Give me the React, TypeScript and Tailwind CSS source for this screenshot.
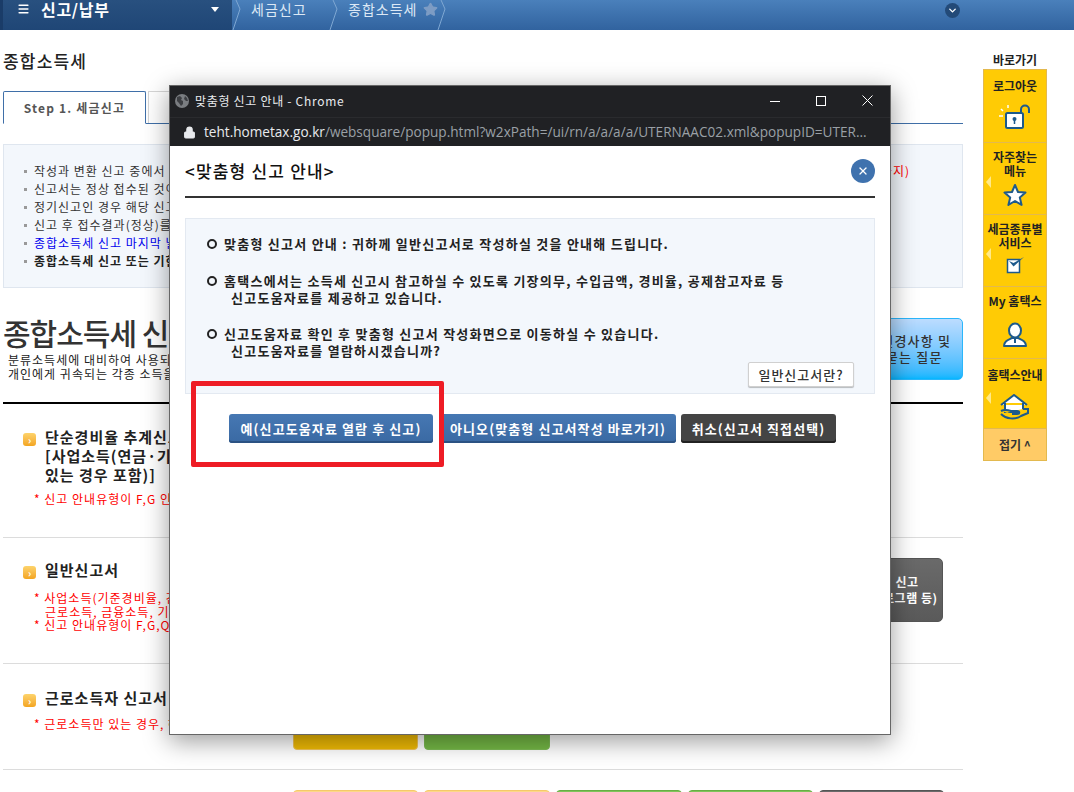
import { ChevronDown, Lock, Menu, Star, X } from 'lucide-react'

const infoLines = [
  { text: '작성과 변환 신고 중에서 선택하여 신고서를 작성하실 수 있습니다.', cls: 'text-[#333]' },
  { text: '신고서는 정상 접수된 것이 확인되어야 신고가 완료됩니다.', cls: 'text-[#333]' },
  { text: '정기신고인 경우 해당 신고기간에 제출하시기 바랍니다.', cls: 'text-[#333]' },
  { text: '신고 후 접수결과(정상)를 반드시 확인하시기 바랍니다.', cls: 'text-[#333]' },
  { text: '종합소득세 신고 마지막 날에는 접속이 지연될 수 있습니다.', cls: 'text-[#0000ee]' },
  { text: '종합소득세 신고 또는 기한후 신고를 선택하십시오.', cls: 'text-[#222] font-bold' },
]

const sideItems = [
  { label: ['로그아웃'], icon: 'lock', box: 'h-[73px] pt-[9px]', iconBox: 'mb-[12px]' },
  { label: ['자주찾는', '메뉴'], icon: 'star', box: 'h-[72px] pt-[7px]', iconBox: 'mb-[7px]', arrow: true },
  { label: ['세금종류별', '서비스'], icon: 'check', box: 'h-[72px] pt-[7px]', iconBox: 'mb-[12px]', arrow: true },
  { label: ['My 홈택스'], icon: 'user', box: 'h-[72px] pt-[7px]', iconBox: 'mb-[10px]' },
  { label: ['홈택스안내'], icon: 'home', box: 'h-[70px] pt-[9px]', iconBox: 'mb-[8px]', arrow: true },
]

function SideIcon({ name }: { name: string }) {
  if (name === 'lock') {
    return (
      <svg width="34" height="26" viewBox="0 0 34 26" fill="none">
        <rect x="8" y="9" width="17" height="15" rx="1.500" fill="#fff" stroke="#1d5a8c" strokeWidth="2" />
        <path d="M23 9V5.500a4 4 0 0 1 8 0V9" stroke="#1d5a8c" strokeWidth="2" />
        <circle cx="16.500" cy="15" r="2" fill="#1d5a8c" />
        <path d="M16.500 16v4" stroke="#1d5a8c" strokeWidth="1.500" />
        <path d="M1 12h4M3 5l2 2M10 1v3" stroke="#fff" strokeWidth="1.500" />
      </svg>
    )
  }
  if (name === 'star') {
    return (
      <svg width="24" height="24" viewBox="0 0 24 24">
        <path d="M12 2l3 7 7.500 .6-5.700 4.900 1.800 7.400L12 18l-6.600 3.900 1.800-7.400L1.500 9.600 9 9z" fill="#fff" stroke="#1d5a8c" strokeWidth="2" strokeLinejoin="round" />
      </svg>
    )
  }
  if (name === 'check') {
    return (
      <svg width="20" height="18" viewBox="0 0 20 18" fill="none">
        <rect x="2.500" y="3.500" width="12" height="13" fill="#fff" stroke="#1d5a8c" strokeWidth="1.500" />
        <path d="M4 5l4.500 5.500L19 1 8.500 7z" fill="#1d5a8c" />
      </svg>
    )
  }
  if (name === 'user') {
    return (
      <svg width="26" height="26" viewBox="0 0 26 26" fill="none">
        <ellipse cx="13" cy="8.500" rx="6" ry="7" fill="#fff" stroke="#1d5a8c" strokeWidth="2" />
        <path d="M2 24c0-5 4-6 8-8h6c4 2 8 3 8 8z" fill="#fff" stroke="#1d5a8c" strokeWidth="2" strokeLinejoin="round" />
        <path d="M13 16v5" stroke="#1d5a8c" strokeWidth="2" />
      </svg>
    )
  }
  return (
    <svg width="30" height="26" viewBox="0 0 30 26" fill="none">
      <path d="M1 11L14 1l13 10M5 9v9h18V9" fill="#fff" stroke="#1d5a8c" strokeWidth="2" />
      <path d="M1 17c4-2 7-1 10 0h6c3 0 3 3 0 3h-5M1 20c5 5 14 6 20 2l7-3v-4h-5" fill="#ffcb05" stroke="#1d5a8c" strokeWidth="2" />
    </svg>
  )
}

function CrumbEdge() {
  return (
    <svg width="9" height="30" viewBox="0 0 9 30" fill="none" className="shrink-0">
      <path d="M4 0l4 9-7 21" stroke="#7ea7d2" strokeWidth="1" />
    </svg>
  )
}

function Breadcrumb({ label, width, star }: { label: string; width: string; star?: boolean }) {
  return (
    <div className={`flex h-[18px] shrink-0 items-center ${width}`}>
      <div className="self-start">
        <CrumbEdge />
      </div>
      <span className="ml-[10px] text-[14px] tracking-[1px] whitespace-nowrap text-[#dce8f5]">{label}</span>
      {star && <Star className="ml-[6px] h-[15px] w-[15px] shrink-0 fill-[#7d9cc4] text-[#7d9cc4]" />}
    </div>
  )
}

function Bullet() {
  return <span className="mt-[6px] h-[13px] w-[13px] shrink-0 rounded-[3px] bg-gradient-to-b from-[#fdd36a] to-[#f3a51d] text-center text-[10px] leading-[13px] font-bold text-white">›</span>
}

function StatusItem({ children }: { children: React.ReactNode }) {
  return <p className="pl-[10px] -indent-[10px] text-[12px] leading-[13.500px] tracking-[1px] whitespace-nowrap text-[#ff0000]">{children}</p>
}

function Circle() {
  return <span className="mt-[4px] mr-[7px] h-[10px] w-[10px] shrink-0 rounded-full border-2 border-[#222]" />
}

export default function App() {
  return (
    <div className="relative h-[792px] w-[1074px] overflow-hidden bg-white font-['Noto_Sans_CJK_KR','Liberation_Sans',sans-serif]">
      {/* Top bar */}
      <header className="flex h-[30px] bg-gradient-to-b from-[#4a80bb] to-[#31639f] pr-[114px]">
        <div className="flex w-[232px] shrink-0 items-start border-l-[3px] border-[#1a3c68] bg-gradient-to-b from-[#28507f] to-[#1f4676] pl-[14px]">
          <div className="flex h-[18px] items-center">
            <Menu className="h-[16px] w-[13px] text-white" strokeWidth={3} />
            <span className="ml-[11px] text-[16px] font-bold tracking-[0.7px] whitespace-nowrap text-white">신고/납부</span>
            <span className="ml-[101px] h-0 w-0 border-x-[4px] border-t-[5px] border-x-transparent border-t-white" />
          </div>
        </div>
        <Breadcrumb label="세금신고" width="w-[97px]" />
        <Breadcrumb label="종합소득세" width="w-[108px]" star />
        <CrumbEdge />
        <div className="ml-auto flex h-[20px] items-center">
          <span className="flex h-[15px] w-[15px] items-center justify-center rounded-full bg-[#234a78]">
            <ChevronDown className="h-[11px] w-[11px] text-white" strokeWidth={3} />
          </span>
        </div>
      </header>

      <div className="flex">
        {/* Page content behind the popup */}
        <main className="ml-[3px] w-[960px]">
          <h1 className="mt-[21px] h-[20px] text-[17px] leading-[20px] font-medium tracking-[1.2px] text-[#222]">종합소득세</h1>

          <div className="mt-[20px] flex h-[33px] items-end border-b border-[#3f6fa8]">
            <div className="-mb-px flex h-[33px] w-[143px] items-center justify-center rounded-t-[2px] border border-b-white border-[#3f6fa8] bg-white text-[12px] font-bold tracking-[1.200px] text-[#555]">
              Step 1. 세금신고
            </div>
            <div className="ml-[2px] flex h-[32px] w-[143px] items-center justify-center border border-b-0 border-[#d5d5d5] text-[12px] font-bold text-[#555]">
              Step 2.
            </div>
          </div>

          <section className="mt-[20px] h-[144px] border border-[#dfe6ef] bg-[#f3f7fc] pt-[17px] pr-[52px] pl-[20px]">
            {infoLines.map((line, i) => (
              <div key={i} className="flex h-[18px] items-center">
                <span className="mr-[7px] h-[3px] w-[3px] shrink-0 bg-[#999]" />
                <span className={`text-[12px] tracking-[1px] ${line.cls}`}>{line.text}</span>
                {i === 0 && <span className="ml-auto text-[12px] tracking-[1px] text-[#ff0000]">까지)</span>}
              </div>
            ))}
          </section>

          {/* Big title with the notice button */}
          <div className="mt-[28px] flex h-[88px] justify-between border-b-2 border-black">
            <div>
              <h2 className="mt-[-3px] text-[30px] leading-[38px] tracking-[-1px] font-medium text-[#333]">종합소득세 신고</h2>
              <p className="mt-[2px] pl-[5px] text-[12px] leading-[14px] tracking-[1px] text-[#222]">
                분류소득세에 대비하여 사용되는 용어로서
                <br />
                개인에게 귀속되는 각종 소득을 합산하여 과세합니다.
              </p>
            </div>
            <div className="mt-[2px] mb-[22px] flex w-[140px] items-center justify-center rounded-[5px] border border-[#2ab6fb] bg-gradient-to-b from-[#bcdcff] to-[#00b6ff] pl-[16px] text-center text-[13px] leading-[16px] font-medium tracking-[1.200px] text-[#333]">
              세법 변경사항 및
              <br />
              자주묻는 질문
            </div>
          </div>

          <section className="flex h-[134px] border-b border-[#dcdcdc] pt-[23px] pl-[20px]">
            <Bullet />
            <div className="ml-[9px]">
              <h3 className="text-[15px] leading-[19px] font-bold tracking-[1px] text-[#222]">
                단순경비율 추계신고서
                <br />
                [사업소득(연금·기타소득이
                <br />
                있는 경우 포함)]
              </h3>
              <div className="mt-[8px] -ml-[11px]">
                <StatusItem>* 신고 안내유형이 F,G 인 경우 제외</StatusItem>
              </div>
            </div>
          </section>

          <section className="flex h-[126px] border-b border-[#dcdcdc] pt-[22px] pl-[20px]">
            <Bullet />
            <div className="ml-[9px] flex-1">
              <h3 className="text-[15px] leading-[20px] font-bold tracking-[1px] text-[#222]">일반신고서</h3>
              <div className="mt-[11px] -ml-[11px]">
                <StatusItem>* 사업소득(기준경비율, 간편장부 등)</StatusItem>
                <StatusItem>&nbsp;&nbsp;&nbsp;근로소득, 금융소득, 기타소득 등</StatusItem>
                <StatusItem>* 신고 안내유형이 F,G,Q,R 인 경우</StatusItem>
              </div>
            </div>
            <div className="mt-[-2px] mr-[20px] flex h-[64px] w-[72px] flex-col items-center justify-center rounded-[5px] border border-[#555] bg-gradient-to-b from-[#6a6a6a] to-[#5a5a5a] text-[12px] leading-[16px] font-bold tracking-[0.5px] whitespace-nowrap text-white">
              <span>신고</span>
              <span className="mr-[10px]">(프로그램 등)</span>
            </div>
          </section>

          <section className="flex h-[106px] border-b border-[#dcdcdc] pt-[24px] pl-[20px]">
            <Bullet />
            <div className="ml-[9px] w-[248px]">
              <h3 className="text-[15px] leading-[20px] font-bold tracking-[1px] text-[#222]">근로소득자 신고서</h3>
              <div className="mt-[9px] -ml-[11px]">
                <StatusItem>* 근로소득만 있는 경우, 해당</StatusItem>
              </div>
            </div>
            <div className="-mt-[2px] flex h-[64px] gap-[6px]">
              <div className="h-full w-[125px] rounded-[4px] border border-[#f3c659] bg-[#f0bb05]" />
              <div className="h-full w-[126px] rounded-[4px] border border-[#7dbb55] bg-[#74b845]" />
            </div>
          </section>

          <section className="flex pt-[20px] pl-[290px]">
            <div className="flex gap-[6px]">
              <div className="h-[60px] w-[125px] rounded-[4px] border border-[#f5c96a] bg-[#fdd889]" />
              <div className="h-[60px] w-[126px] rounded-[4px] border border-[#f5c96a] bg-[#fdd889]" />
              <div className="h-[60px] w-[126px] rounded-[4px] border border-[#68ae45] bg-[#7fc45a]" />
              <div className="h-[60px] w-[125px] rounded-[4px] border border-[#68ae45] bg-[#7fc45a]" />
              <div className="h-[60px] w-[125px] rounded-[4px] border border-[#555] bg-[#6a6a6a]" />
            </div>
          </section>
        </main>

        {/* Quick menu */}
        <aside className="ml-[20px] w-[64px]">
          <div className="mt-[22px] h-[17px] text-center text-[12px] leading-[15px] font-bold whitespace-nowrap text-[#222]">바로가기</div>
          <div className="border border-[#e3b94f] bg-[#ffcb05]">
            {sideItems.map((item) => (
              <div key={item.icon} className={`relative flex flex-col items-center border-b border-[#e3b94f] ${item.box}`}>
                {item.label.map((l) => (
                  <span key={l} className="text-[12px] leading-[14px] font-bold whitespace-nowrap text-[#222]">{l}</span>
                ))}
                <div className={`mt-auto ${item.iconBox}`}>
                  <SideIcon name={item.icon} />
                </div>
                {item.arrow && <span className="absolute top-[33px] left-[2px] h-0 w-0 border-y-[6px] border-r-[5px] border-y-transparent border-r-[#ffe98a]" />}
              </div>
            ))}
            <div className="flex h-[31px] items-center justify-center bg-[#ffcb66] text-[12px] font-bold text-[#333]">접기 ^</div>
          </div>
        </aside>
      </div>

      {/* Popup window */}
      <div className="absolute top-[85px] left-[169px] flex h-[650px] w-[722px] flex-col border border-[#666] bg-white shadow-[0_6px_24px_rgba(0,0,0,0.4)]">
        <div className="flex h-[31px] items-center bg-[#202124] pb-[2px] pl-[5px] text-[12px] tracking-[0.7px] text-[#e8eaed]">
          <svg width="14" height="14" viewBox="0 0 14 14" className="shrink-0">
            <circle cx="7" cy="7" r="7" fill="#7a7d81" />
            <path d="M2 3l3-1 2 2-1 2 2 1 0 3-2 2-2-3-2-2zM10 2l2 2 1 3-2 0-2-2z" fill="#3c3e42" />
          </svg>
          <span className="ml-[6px] whitespace-nowrap">맞춤형 신고 안내 - Chrome</span>
          <div className="ml-auto mr-[17px] flex items-center gap-[36px]">
            <svg width="10" height="10" viewBox="0 0 10 10" stroke="#fff" strokeWidth="1">
              <path d="M0 5.500h10" />
            </svg>
            <svg width="10" height="10" viewBox="0 0 10 10" fill="none" stroke="#fff" strokeWidth="1">
              <rect x=".5" y=".5" width="9" height="9" />
            </svg>
            <svg width="11" height="11" viewBox="0 0 11 11" stroke="#fff" strokeWidth="1">
              <path d="M.5 .5l10 10M10.500 .5l-10 10" />
            </svg>
          </div>
        </div>
        <div className="flex h-[29px] items-center border-t border-[#2a2b2e] bg-[#202124] pl-[13px] font-['Open_Sans','Liberation_Sans',sans-serif] text-[13.600px] text-[#9aa0a6]">
          <Lock className="h-[13px] w-[13px] fill-[#e8eaed] text-[#e8eaed]" strokeWidth={2} />
          <span className="ml-[8px] whitespace-nowrap">
            <span className="text-[#e8eaed]">teht.hometax.go.kr</span>/websquare/popup.html?w2xPath=/ui/rn/a/a/a/a/UTERNAAC02.xml&popupID=UTER...
          </span>
        </div>

        <div className="px-[15px]">
          <div className="flex h-[52px] items-center justify-between border-b-2 border-[#333]">
            <h2 className="text-[17px] font-medium tracking-[1.2px] text-[#111]">&lt;맞춤형 신고 안내&gt;</h2>
            <span className="flex h-[24px] w-[24px] items-center justify-center rounded-full bg-[#3f72ae]">
              <X className="h-[12px] w-[12px] text-white" strokeWidth={2.5} />
            </span>
          </div>

          <div className="mt-[20px] flex h-[176px] flex-col border border-[#e3e9f1] bg-[#f3f7fc] pt-[16px] pl-[21px] text-[13px] leading-[17px] font-bold tracking-[1.250px] text-[#222]">
            <p className="flex items-start whitespace-nowrap"><Circle />맞춤형 신고서 안내 : 귀하께 일반신고서로 작성하실 것을 안내해 드립니다.</p>
            <p className="mt-[20px] flex items-start whitespace-nowrap"><Circle />홈택스에서는 소득세 신고시 참고하실 수 있도록 기장의무, 수입금액, 경비율, 공제참고자료 등</p>
            <p className="pl-[24px]">신고도움자료를 제공하고 있습니다.</p>
            <p className="mt-[19px] flex items-start whitespace-nowrap"><Circle />신고도움자료 확인 후 맞춤형 신고서 작성화면으로 이동하실 수 있습니다.</p>
            <p className="pl-[24px]">신고도움자료를 열람하시겠습니까?</p>
            <div className="mt-auto mr-[20px] mb-[6px] flex justify-end">
              <button className="h-[25px] w-[106px] rounded-[2px] border border-[#d0d0d0] bg-white text-[13px] font-medium tracking-[1px] text-[#333] shadow-[0_1px_1px_rgba(0,0,0,0.25)]">일반신고서란?</button>
            </div>
          </div>

          <div className="mt-[20px] flex gap-[5px] pl-[44px] text-[13px] font-bold tracking-[1.100px] whitespace-nowrap text-white">
            <button className="h-[29px] w-[204px] rounded-[3px] bg-gradient-to-b from-[#4678b3] to-[#3a69a3] shadow-[inset_0_-2px_0_#2b5283]">예(신고도움자료 열람 후 신고)</button>
            <button className="ml-[2px] h-[29px] w-[236px] rounded-[3px] bg-gradient-to-b from-[#4678b3] to-[#3a69a3] shadow-[inset_0_-2px_0_#2b5283]">아니오(맞춤형 신고서작성 바로가기)</button>
            <button className="h-[29px] w-[155px] rounded-[3px] bg-[#444] shadow-[inset_0_-2px_0_#222]">취소(신고서 직접선택)</button>
          </div>
        </div>
      </div>

      {/* Red annotation box */}
      <div className="absolute top-[381px] left-[191px] h-[86px] w-[253px] rounded-[2px] border-[5px] border-[#ee1c25]" />
    </div>
  )
}
